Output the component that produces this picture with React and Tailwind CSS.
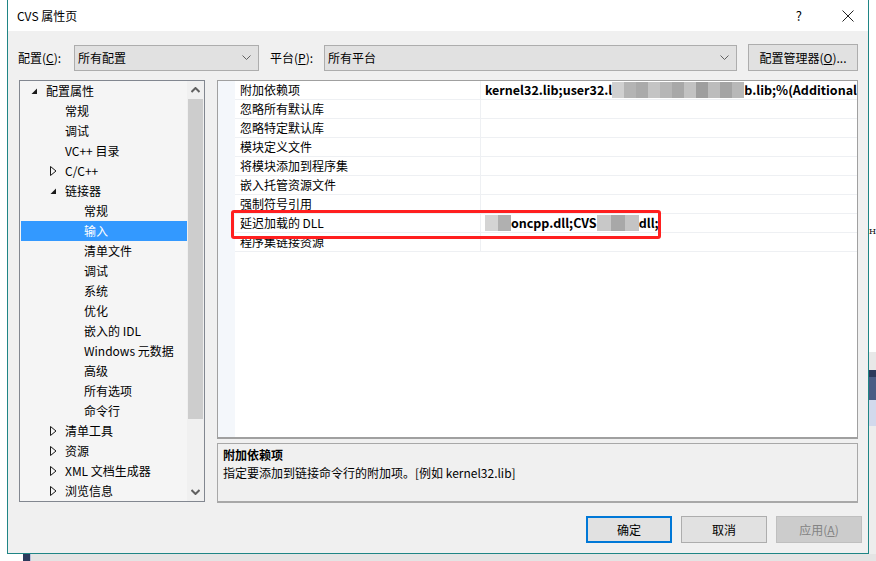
import React from "react";

const treeItems = [
  { level: 0, arrow: "open", text: "配置属性" },
  { level: 1, text: "常规" },
  { level: 1, text: "调试" },
  { level: 1, text: "VC++ 目录" },
  { level: 1, arrow: "closed", text: "C/C++" },
  { level: 1, arrow: "open", text: "链接器" },
  { level: 2, text: "常规" },
  { level: 2, text: "输入", selected: true },
  { level: 2, text: "清单文件" },
  { level: 2, text: "调试" },
  { level: 2, text: "系统" },
  { level: 2, text: "优化" },
  { level: 2, text: "嵌入的 IDL" },
  { level: 2, text: "Windows 元数据" },
  { level: 2, text: "高级" },
  { level: 2, text: "所有选项" },
  { level: 2, text: "命令行" },
  { level: 1, arrow: "closed", text: "清单工具" },
  { level: 1, arrow: "closed", text: "资源" },
  { level: 1, arrow: "closed", text: "XML 文档生成器" },
  { level: 1, arrow: "closed", text: "浏览信息" },
];

const indent = ["pl-[9px]", "pl-[28px]", "pl-[47px]"];

const props = [
  "附加依赖项",
  "忽略所有默认库",
  "忽略特定默认库",
  "模块定义文件",
  "将模块添加到程序集",
  "嵌入托管资源文件",
  "强制符号引用",
  "延迟加载的 DLL",
  "程序集链接资源",
];

const Chevron = () => (
  <svg width="9" height="6" viewBox="0 0 9 6" className="shrink-0">
    <polyline points="0.5,0.5 4.5,4.5 8.5,0.5" fill="none" stroke="#606060" strokeWidth="1" />
  </svg>
);

const Arrow = ({ kind }) => {
  if (kind === "open")
    return (
      <svg width="7" height="7" viewBox="0 0 7 7" className="ml-[1px]">
        <polygon points="6,0.5 6,6 0.5,6" fill="#1a1a1a" />
      </svg>
    );
  if (kind === "closed")
    return (
      <svg width="7" height="10" viewBox="0 0 7 10" className="ml-[1px]">
        <polygon points="0.5,0.5 6,5 0.5,9.5" fill="none" stroke="#1a1a1a" strokeWidth="1" />
      </svg>
    );
  return null;
};

// mosaic blur blocks
const Blur = ({ shades, w }) => (
  <span className="inline-flex h-[16px] align-middle blur-[0.6px]">
    {shades.map((c, i) => (
      <span key={i} className="h-full" style={{ background: c, width: w }} />
    ))}
  </span>
);

export default function App() {
  return (
    <div className="w-[876px] h-[561px] overflow-hidden bg-white flex flex-col font-['Noto_Sans_CJK_SC','Noto_Sans',sans-serif] text-[12px] text-black">
      <div className="flex h-[554px]">
        <div className="w-[7px] bg-white" />
        {/* dialog window */}
        <div className="w-[862px] h-full border-x border-b border-[#1f8585] flex flex-col">
          {/* title bar */}
          <div className="h-[31px] bg-white flex items-center pl-[9px] pr-[14px] shrink-0">
            <span className="leading-none">CVS 属性页</span>
            <span className="ml-auto mr-[40px] text-[13px] leading-none">?</span>
            <svg width="12" height="12" viewBox="0 0 12 12">
              <path d="M0.5 0.5 L11.5 11.5 M11.5 0.5 L0.5 11.5" stroke="#222" strokeWidth="1" />
            </svg>
          </div>

          {/* body */}
          <div className="flex-1 bg-[#f0f0f0] flex flex-col">
            {/* top row */}
            <div className="flex items-center mt-[13px] pl-[10px] h-[27px]">
              <span className="w-[56px]">配置(<span className="underline">C</span>):</span>
              <div className="w-[185px] h-[26px] bg-[#e1e1e1] border border-[#adadad] flex items-center pl-[3px] pr-[7px]">
                <span className="flex-1">所有配置</span>
                <Chevron />
              </div>
              <span className="ml-[11px] w-[54px]">平台(<span className="underline">P</span>):</span>
              <div className="w-[413px] h-[26px] bg-[#e1e1e1] border border-[#adadad] flex items-center pl-[3px] pr-[7px]">
                <span className="flex-1">所有平台</span>
                <Chevron />
              </div>
              <div className="ml-[11px] w-[110px] h-[27px] bg-[#e1e1e1] border border-[#adadad] flex items-center justify-center">
                配置管理器(<span className="underline">O</span>)...
              </div>
            </div>

            {/* main area */}
            <div className="flex mt-[9px] pl-[11px]">
              {/* tree */}
              <div className="w-[186px] h-[422px] border border-[#828790] bg-[#f5f5f5] flex">
                <div className="flex-1 flex flex-col pl-[1px]">
                  {treeItems.map((it, i) => (
                    <div
                      key={i}
                      className={
                        "h-[20px] flex items-center whitespace-nowrap " +
                        indent[it.level] +
                        (it.selected ? " bg-[#3399ff] text-white" : "")
                      }
                    >
                      <span className="w-[16px] flex items-center">
                        <Arrow kind={it.arrow} />
                      </span>
                      <span className="leading-none">{it.text}</span>
                    </div>
                  ))}
                </div>
                {/* scrollbar */}
                <div className="w-[17px] flex flex-col bg-[#f0f0f0]">
                  <div className="h-[18px] flex items-center justify-center">
                    <svg width="9" height="6" viewBox="0 0 9 6">
                      <polyline points="0.5,5 4.5,1 8.5,5" fill="none" stroke="#606060" strokeWidth="2" />
                    </svg>
                  </div>
                  <div className="mx-[1px] h-[320px] bg-[#cdcdcd]" />
                  <div className="flex-1" />
                  <div className="h-[18px] flex items-center justify-center">
                    <svg width="9" height="6" viewBox="0 0 9 6">
                      <polyline points="0.5,1 4.5,5 8.5,1" fill="none" stroke="#606060" strokeWidth="2" />
                    </svg>
                  </div>
                </div>
              </div>

              {/* right column */}
              <div className="ml-[12px] w-[641px] flex flex-col">
                <div className="relative h-[359px] border border-[#a0a0a0] border-b-2 bg-white flex">
                  <div className="w-[20px] bg-[#f4f7fb]" />
                  <div className="flex-1 flex flex-col">
                    {props.map((name, i) => (
                      <div key={i} className="h-[19px] flex border-b border-[#eef0f3]">
                        <div className="w-[246px] pl-[5px] flex items-center border-r border-[#eef0f3] whitespace-nowrap">
                          <span className="leading-none">{name}</span>
                        </div>
                        <div className="flex-1 pl-[4px] flex items-center overflow-hidden whitespace-nowrap font-bold text-[12.5px]">
                          {i === 0 && (
                            <span className="leading-none flex items-center">
                              kernel32.lib;user32.l
                              <Blur
                                w="12px"
                                shades={["#d0d0d0", "#b4b4b4", "#aaaaaa", "#c4c4c4", "#b6b6b6", "#a8a8a8", "#c2c2c2", "#9e9e9e", "#bcbcbc", "#a4a4a4", "#b8b8b8"]}
                              />
                              b.lib;%(Additional
                            </span>
                          )}
                          {i === 7 && (
                            <span className="leading-none flex items-center">
                              <Blur w="13px" shades={["#d4d4d4", "#b0b0b0"]} />
                              oncpp.dll;CVS
                              <Blur w="14px" shades={["#c8c8c8", "#a8a8a8", "#c4c4c4"]} />
                              dll;
                            </span>
                          )}
                        </div>
                      </div>
                    ))}
                  </div>
                  {/* red annotation box */}
                  <div className="absolute left-[13px] top-[129px] w-[430px] h-[29px] border-[3px] border-[#ff1f1f] rounded-[3px]" />
                </div>

                {/* description */}
                <div className="mt-[4px] h-[60px] border border-[#a8a8a8] border-b-2 bg-[#f0f0f0] pl-[5px] pt-[4px] flex flex-col gap-[4px]">
                  <span className="font-bold leading-[14px]">附加依赖项</span>
                  <span className="leading-[14px]">指定要添加到链接命令行的附加项。[例如 kernel32.lib]</span>
                </div>
              </div>
            </div>

            {/* buttons */}
            <div className="flex justify-end gap-[9px] mt-[13px] pr-[6px]">
              <div className="w-[86px] h-[27px] bg-[#e1e1e1] border-2 border-[#0078d7] flex items-center justify-center">确定</div>
              <div className="w-[86px] h-[27px] bg-[#e1e1e1] border border-[#adadad] flex items-center justify-center">取消</div>
              <div className="w-[86px] h-[27px] bg-[#cccccc] border border-[#bfbfbf] text-[#838383] flex items-center justify-center">
                应用(<span className="underline">A</span>)
              </div>
            </div>
          </div>
        </div>

        {/* background strip on the right */}
        <div className="w-[7px] flex flex-col">
          <div className="h-[352px] bg-white pt-[228px] font-['DejaVu_Serif',serif] text-[8px] leading-none">H</div>
          <div className="h-[18px] bg-[#e8e8e8]" />
          <div className="h-[7px] bg-[#2c3a5c]" />
          <div className="h-[23px] bg-[#4a5c85]" />
          <div className="h-[26px] bg-[#d2d9ec]" />
          <div className="flex-1 bg-[#ededed]" />
        </div>
      </div>
      {/* below the window */}
      <div className="flex-1 flex">
        <div className="w-[23px] bg-white" />
        <div className="w-[7px] bg-[#2c3a5c]" />
        <div className="w-[1px] bg-[#b8c0dc]" />
        <div className="flex-1 bg-[#e4e4e4]" />
      </div>
    </div>
  );
}
